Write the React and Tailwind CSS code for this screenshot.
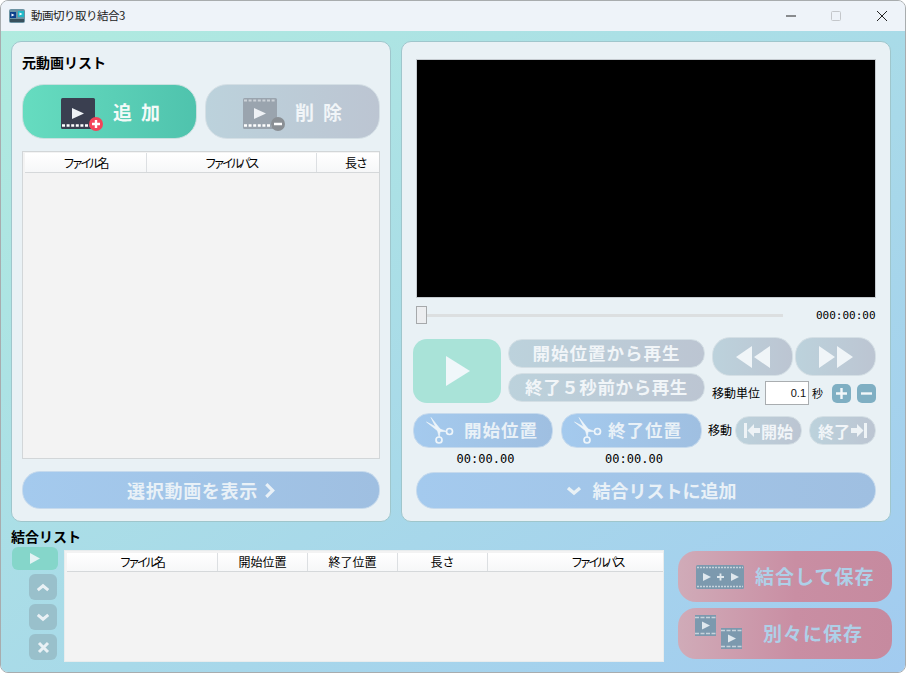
const jp = "font-['Noto_Sans_CJK_JP','Noto_Sans',sans-serif]";
const mono = "font-['DejaVu_Sans_Mono',monospace] text-[11px] leading-none text-black";
const stamp = "font-['DejaVu_Sans_Mono',monospace] text-[12px] leading-none text-black mt-[5px] pl-[5px] text-center";
const grayBtn = "flex items-center justify-center border border-[#d4dfe5] bg-gradient-to-r from-[#bcd2dc] to-[#bcc5d2] font-bold text-[#f1f5f8]";
const blueBtn = "flex items-center justify-center border border-[#c6daed] bg-gradient-to-r from-[#a4caee] to-[#9fbfe1] font-bold text-[#e9f1f7]";
const pinkBtn = "flex h-[51px] items-center bg-gradient-to-r from-[#d0abb8] via-[#c98ea3] via-55% to-[#c68a9f] font-bold text-[#aed0e8]";
const sideBtn = "ml-[18px] flex h-[26px] w-[28px] items-center justify-center rounded-md bg-[#99c0cb]";
const kana = "mr-[2px] tracking-[-3.4px]";

function FilmIcon({ fill, playFill, badge, badgeFill }) {
  return (
    <svg width="44" height="38" viewBox="0 0 44 38">
      <rect x="0" y="5" width="34" height="31" rx="1.5" fill={fill} />
      <path d="M1 32.5h32" stroke="#fff" strokeWidth="2.5" strokeDasharray="3 1.6" />
      {badge === "minus" && <path d="M1 7.5h32" stroke="#ccd2d8" strokeWidth="2" strokeDasharray="3 1.6" />}
      <path d="M11 15l12 5.5-12 5.5z" fill={playFill} />
      <circle cx="35" cy="31" r="7" fill={badgeFill} />
      <path d="M31 31h8" stroke="#fff" strokeWidth="2.4" />
      {badge === "plus" && <path d="M35 27v8" stroke="#fff" strokeWidth="2.4" />}
    </svg>
  );
}

function Scissors() {
  return (
    <svg width="28" height="28" viewBox="0 0 28 28" fill="none" stroke="#eef5fa" strokeWidth="1.7">
      <circle cx="13" cy="23" r="3" />
      <circle cx="23.5" cy="14.5" r="3" />
      <path d="M5 0.5L14.5 12.5 13.2 20.2 11.5 13.5z" fill="#eef5fa" strokeWidth="0.6" />
      <path d="M0.5 5L14 12 20.7 14.5 12.5 14.5z" fill="#eef5fa" strokeWidth="0.6" />
    </svg>
  );
}

function SkipArrow({ flip }) {
  return (
    <svg width="16" height="15" viewBox="0 0 16 15" fill="#eef3f6" className={flip ? "-scale-x-100" : ""}>
      <rect x="0" y="0" width="3" height="15" />
      <path d="M3.5 7.5l6.5-6.5v4h6v5h-6v4z" />
    </svg>
  );
}

function Chevron({ dir, w = 16, h = 10, stroke = "#e9f1f5", sw = 3.4 }) {
  const d = dir === "up" ? "M2 8l6-5 6 5" : "M2 2l6 5 6-5";
  return (
    <svg width={w} height={h} viewBox="0 0 16 10" fill="none" stroke={stroke} strokeWidth={sw}>
      <path d={d} />
    </svg>
  );
}

function HeaderCell({ w, h = "h-[19px]", children }) {
  return (
    <div className={`flex items-center justify-center border-r border-[#dcdfe2] bg-gradient-to-b from-white to-[#f6f7f8] text-[12px] leading-none text-black ${h} ${w}`}>
      {children}
    </div>
  );
}

export default function App() {
  return (
    <div className={`${jp} flex h-[673px] w-[906px] flex-col overflow-hidden rounded-lg border border-[#a8acae] bg-[#eef3f9]`}>
      {/* タイトルバー */}
      <div className="flex h-[30px] shrink-0 items-center bg-[#eef3f9] pl-[8px]">
        <svg width="16" height="16" viewBox="0 0 16 16">
          <rect x="0" y="1" width="16" height="14" rx="2" fill="#6c93a3" />
          <rect x="1" y="4" width="6" height="6" fill="#0b3f8c" />
          <rect x="9" y="3" width="6" height="6" fill="#20b8c8" />
          <path d="M2.5 5.5l3 1.5-3 1.5zM10.5 4.5l3 1.5-3 1.5z" fill="#fff" />
          <rect x="1" y="11" width="14" height="3" fill="#38505c" />
        </svg>
        <span className="ml-[6px] text-[11.5px] leading-none tracking-[-0.5px] text-[#222]">動画切り取り結合3</span>
        <div className="ml-auto flex items-center">
          <svg width="12" height="12" viewBox="0 0 12 12" className="mr-[33px]"><path d="M1 6h10" stroke="#222" /></svg>
          <svg width="12" height="12" viewBox="0 0 12 12" className="mr-[34px]"><rect x="1.5" y="1.5" width="9" height="9" rx="1" fill="none" stroke="#c4c7cb" /></svg>
          <svg width="12" height="12" viewBox="0 0 12 12" className="mr-[17px]"><path d="M1 1l10 10M11 1L1 11" stroke="#222" /></svg>
        </div>
      </div>

      <div className="flex flex-1 flex-col bg-gradient-to-br from-[#b0ebdf] to-[#a2cbf0] pl-[10px] pr-[12px] pt-[10px]">
        <div className="flex h-[481px] gap-[10px]">
          {/* 元動画リスト */}
          <div className="flex w-[380px] flex-col rounded-[10px] border border-[#9fc6cc] bg-[#e9f1f5] pl-[10px] pr-[10px]">
            <div className="mt-[12px] h-[16px] text-[14px] font-bold leading-4 text-black">元動画リスト</div>
            <div className="mt-[14px] flex gap-[8px]">
              <div className="flex h-[55px] w-[175px] items-center rounded-[22px] border border-[#c9e0df] bg-gradient-to-r from-[#66dcc0] to-[#4fc3ad] pl-[38px]">
                <FilmIcon fill="#3a3f50" playFill="#eef1f5" badge="plus" badgeFill="#f4445a" />
                <span className="ml-[8px] mt-[1px] text-[19px] font-bold tracking-[9px] text-[#f3faf8]">追加</span>
              </div>
              <div className={`${grayBtn} h-[55px] w-[175px] !justify-start rounded-[22px] pl-[37px]`}>
                <FilmIcon fill="#9aa4ae" playFill="#eef1f5" badge="minus" badgeFill="#8a8f94" />
                <span className="ml-[8px] mt-[1px] text-[19px] tracking-[9px]">削除</span>
              </div>
            </div>
            <div className="mt-[12px] flex h-[308px] flex-col border border-[#d2d6d8] bg-[#f3f3f3] pl-[2px] pt-[1px]">
              <div className="flex border-b border-[#d5d8da]">
                <HeaderCell w="w-[122px]"><span className={kana}>ファイル名</span></HeaderCell>
                <HeaderCell w="w-[170px]"><span className={kana}>ファイルパス</span></HeaderCell>
                <div className="flex h-[19px] flex-1 items-center justify-end bg-gradient-to-b from-white to-[#f6f7f8] pr-[12px] text-[12px] leading-none tracking-[-1px] text-black">長さ</div>
              </div>
            </div>
            <div className={`${blueBtn} mt-[12px] h-[38px] w-[358px] gap-[6px] rounded-[18px] text-[18px] tracking-[0.7px]`}>
              <span>選択動画を表示</span>
              <svg width="11" height="17" viewBox="0 0 10 16" fill="none" stroke="#e9f1f7" strokeWidth="3"><path d="M2 2l6 6-6 6" /></svg>
            </div>
          </div>

          {/* プレビュー */}
          <div className="flex w-[490px] flex-col rounded-[10px] border border-[#9fc6cc] bg-[#e9f1f5] pl-[11px]">
            <div className="ml-[3px] mt-[17px] h-[239px] w-[460px] border border-[#c5cbd0] bg-black" />
            <div className="ml-[3px] mt-[7px] flex h-[20px] items-center">
              <div className="h-[18px] w-[11px] border border-[#a6a9ab] bg-[#eceef0]" />
              <div className="h-[3px] w-[356px] bg-[#dcdfe0]" />
              <span className={`${mono} ml-[33px]`}>000:00:00</span>
            </div>

            <div className="mt-[12px] flex">
              <div className="mt-[2px] flex h-[64px] w-[88px] items-center justify-center rounded-[14px] bg-[#a9e3d8] pl-[2px]">
                <svg width="26" height="32" viewBox="0 0 26 32"><path d="M1 1l24 15L1 31z" fill="#f0f7fa" /></svg>
              </div>
              <div className="ml-[7px] mt-[2px] flex w-[197px] flex-col gap-[5px]">
                <div className={`${grayBtn} h-[29px] rounded-[14px] text-[17.5px] tracking-[1px]`}>開始位置から再生</div>
                <div className={`${grayBtn} h-[29px] rounded-[14px] text-[17.5px] tracking-[0.6px]`}>終了５秒前から再生</div>
              </div>
              <div className="ml-[7px] flex w-[164px] flex-col">
                <div className="flex gap-[2px]">
                  <div className={`${grayBtn} h-[39px] w-[81px] rounded-[18px]`}>
                    <svg width="36" height="24" viewBox="0 0 36 24" fill="#f0f5f8"><path d="M17 1v22L1 12zM35 1v22L19 12z" /></svg>
                  </div>
                  <div className={`${grayBtn} h-[39px] w-[81px] rounded-[18px]`}>
                    <svg width="36" height="24" viewBox="0 0 36 24" fill="#f0f5f8"><path d="M1 1v22l16-11zM19 1v22l16-11z" /></svg>
                  </div>
                </div>
                <div className="mt-[5px] flex h-[24px] items-center">
                  <span className="w-[53px] text-[12px] leading-none text-black">移動単位</span>
                  <div className="flex h-[24px] w-[44px] items-center justify-end border border-[#a9adb0] bg-white pr-[2px] font-['Liberation_Sans',sans-serif] text-[11px] text-[#111]">0.1</div>
                  <span className="ml-[3px] text-[11px] leading-none text-black">秒</span>
                  <div className="ml-[9px] flex h-[19px] w-[19px] items-center justify-center rounded-[5px] bg-[#7fafc3]">
                    <svg width="13" height="13" viewBox="0 0 13 13"><path d="M1 6.5h11M6.5 1v11" stroke="#f2f7f9" strokeWidth="2.4" /></svg>
                  </div>
                  <div className="ml-[6px] flex h-[19px] w-[19px] items-center justify-center rounded-[5px] bg-[#7fafc3]">
                    <svg width="13" height="13" viewBox="0 0 13 13"><path d="M1 6.5h11" stroke="#f2f7f9" strokeWidth="2.4" /></svg>
                  </div>
                </div>
              </div>
            </div>

            <div className="mt-[8px] flex">
              <div className="w-[140px]">
                <div className={`${blueBtn} h-[35px] !justify-start rounded-[16px] pl-[12px] text-[17.5px] tracking-[1px]`}>
                  <Scissors />
                  <span className="ml-[10px]">開始位置</span>
                </div>
                <div className={stamp}>00:00.00</div>
              </div>
              <div className="ml-[8px] w-[141px]">
                <div className={`${blueBtn} h-[35px] !justify-start rounded-[16px] pl-[12px] text-[17.5px] tracking-[1px]`}>
                  <Scissors />
                  <span className="ml-[6px]">終了位置</span>
                </div>
                <div className={stamp}>00:00.00</div>
              </div>
              <span className="ml-[6px] mt-[11px] w-[27px] text-[12px] leading-[12px] text-black">移動</span>
              <div className={`${grayBtn} mt-[3px] h-[29px] w-[67px] gap-[1px] rounded-[14px] text-[16px]`}>
                <SkipArrow />
                <span>開始</span>
              </div>
              <div className={`${grayBtn} ml-[7px] mt-[3px] h-[29px] w-[67px] gap-[1px] rounded-[14px] text-[16px]`}>
                <span>終了</span>
                <SkipArrow flip />
              </div>
            </div>

            <div className={`${blueBtn} ml-[3px] mt-[7px] h-[37px] w-[460px] gap-[11px] rounded-[18px] pl-[10px] text-[18px]`}>
              <Chevron dir="down" />
              <span>結合リストに追加</span>
            </div>
          </div>
        </div>

        {/* 結合リスト */}
        <div className="mt-[6px] h-[16px] text-[14px] font-bold leading-4 text-black">結合リスト</div>
        <div className="mt-[1px] flex">
          <div className="flex w-[47px] flex-col">
            <div className="ml-[1px] mt-[2px] flex h-[23px] w-[46px] items-center justify-center rounded-md bg-[#85d6ca]">
              <svg width="12" height="13" viewBox="0 0 12 13"><path d="M1 1l10 5.5L1 12z" fill="#e4f3f4" /></svg>
            </div>
            <div className="mt-[4px] flex flex-col gap-[4px]">
              <div className={sideBtn}><Chevron dir="up" w={14} h={9} /></div>
              <div className={sideBtn}><Chevron dir="down" w={14} h={9} /></div>
              <div className={sideBtn}>
                <svg width="13" height="13" viewBox="0 0 13 13"><path d="M2 2l9 9M11 2l-9 9" stroke="#e9f1f5" strokeWidth="3" /></svg>
              </div>
            </div>
          </div>
          <div className="ml-[6px] mt-[5px] flex h-[112px] w-[600px] flex-col border border-[#e8eced] bg-[#f3f3f3] pl-[2px] pt-[2px]">
            <div className="flex border-b border-[#d5d8da]">
              <HeaderCell w="w-[151px]" h="h-[18px]"><span className={kana}>ファイル名</span></HeaderCell>
              <HeaderCell w="w-[90px]" h="h-[18px]">開始位置</HeaderCell>
              <HeaderCell w="w-[90px]" h="h-[18px]">終了位置</HeaderCell>
              <HeaderCell w="w-[90px]" h="h-[18px]">長さ</HeaderCell>
              <div className="flex h-[18px] flex-1 items-center bg-gradient-to-b from-white to-[#f6f7f8] pl-[83px] text-[12px] leading-none text-black"><span className={kana}>ファイルパス</span></div>
            </div>
          </div>
          <div className="ml-[14px] mt-[6px] flex w-[214px] flex-col gap-[6px]">
            <div className={`${pinkBtn} rounded-[18px] pl-[18px] text-[19px] tracking-[1px]`}>
              <svg width="48" height="24" viewBox="0 0 48 24">
                <rect width="48" height="24" rx="1.5" fill="#7c99ae" />
                <path d="M1 2.5h46M1 21.5h46" stroke="#c6d3dc" strokeWidth="1.5" strokeDasharray="2 1" />
                <path d="M7 8l8 4-8 4zM35 8l8 4-8 4z" fill="#dfe8ee" />
                <path d="M21 12h7M24.5 8.5v7" stroke="#dfe8ee" strokeWidth="1.8" />
              </svg>
              <span className="ml-[11px]">結合して保存</span>
            </div>
            <div className={`${pinkBtn} relative rounded-[18px] pl-[85px] text-[19px] tracking-[1px]`}>
              <svg width="48" height="36" viewBox="0 0 48 36" className="absolute left-[17px] top-[7px]">
                <rect x="0" y="0" width="21" height="21" fill="#7c99ae" />
                <path d="M0 2.5h21M0 18.5h21" stroke="#c6d3dc" strokeWidth="1.3" strokeDasharray="4 1.5" />
                <path d="M7 6.5l8 4-8 4z" fill="#dfe8ee" />
                <rect x="26" y="13" width="21" height="21" fill="#7c99ae" />
                <path d="M26 15.5h21M26 31.5h21" stroke="#c6d3dc" strokeWidth="1.3" strokeDasharray="4 1.5" />
                <path d="M33 19.5l8 4-8 4z" fill="#dfe8ee" />
              </svg>
              <span>別々に保存</span>
            </div>
          </div>
        </div>
      </div>
    </div>
  );
}
